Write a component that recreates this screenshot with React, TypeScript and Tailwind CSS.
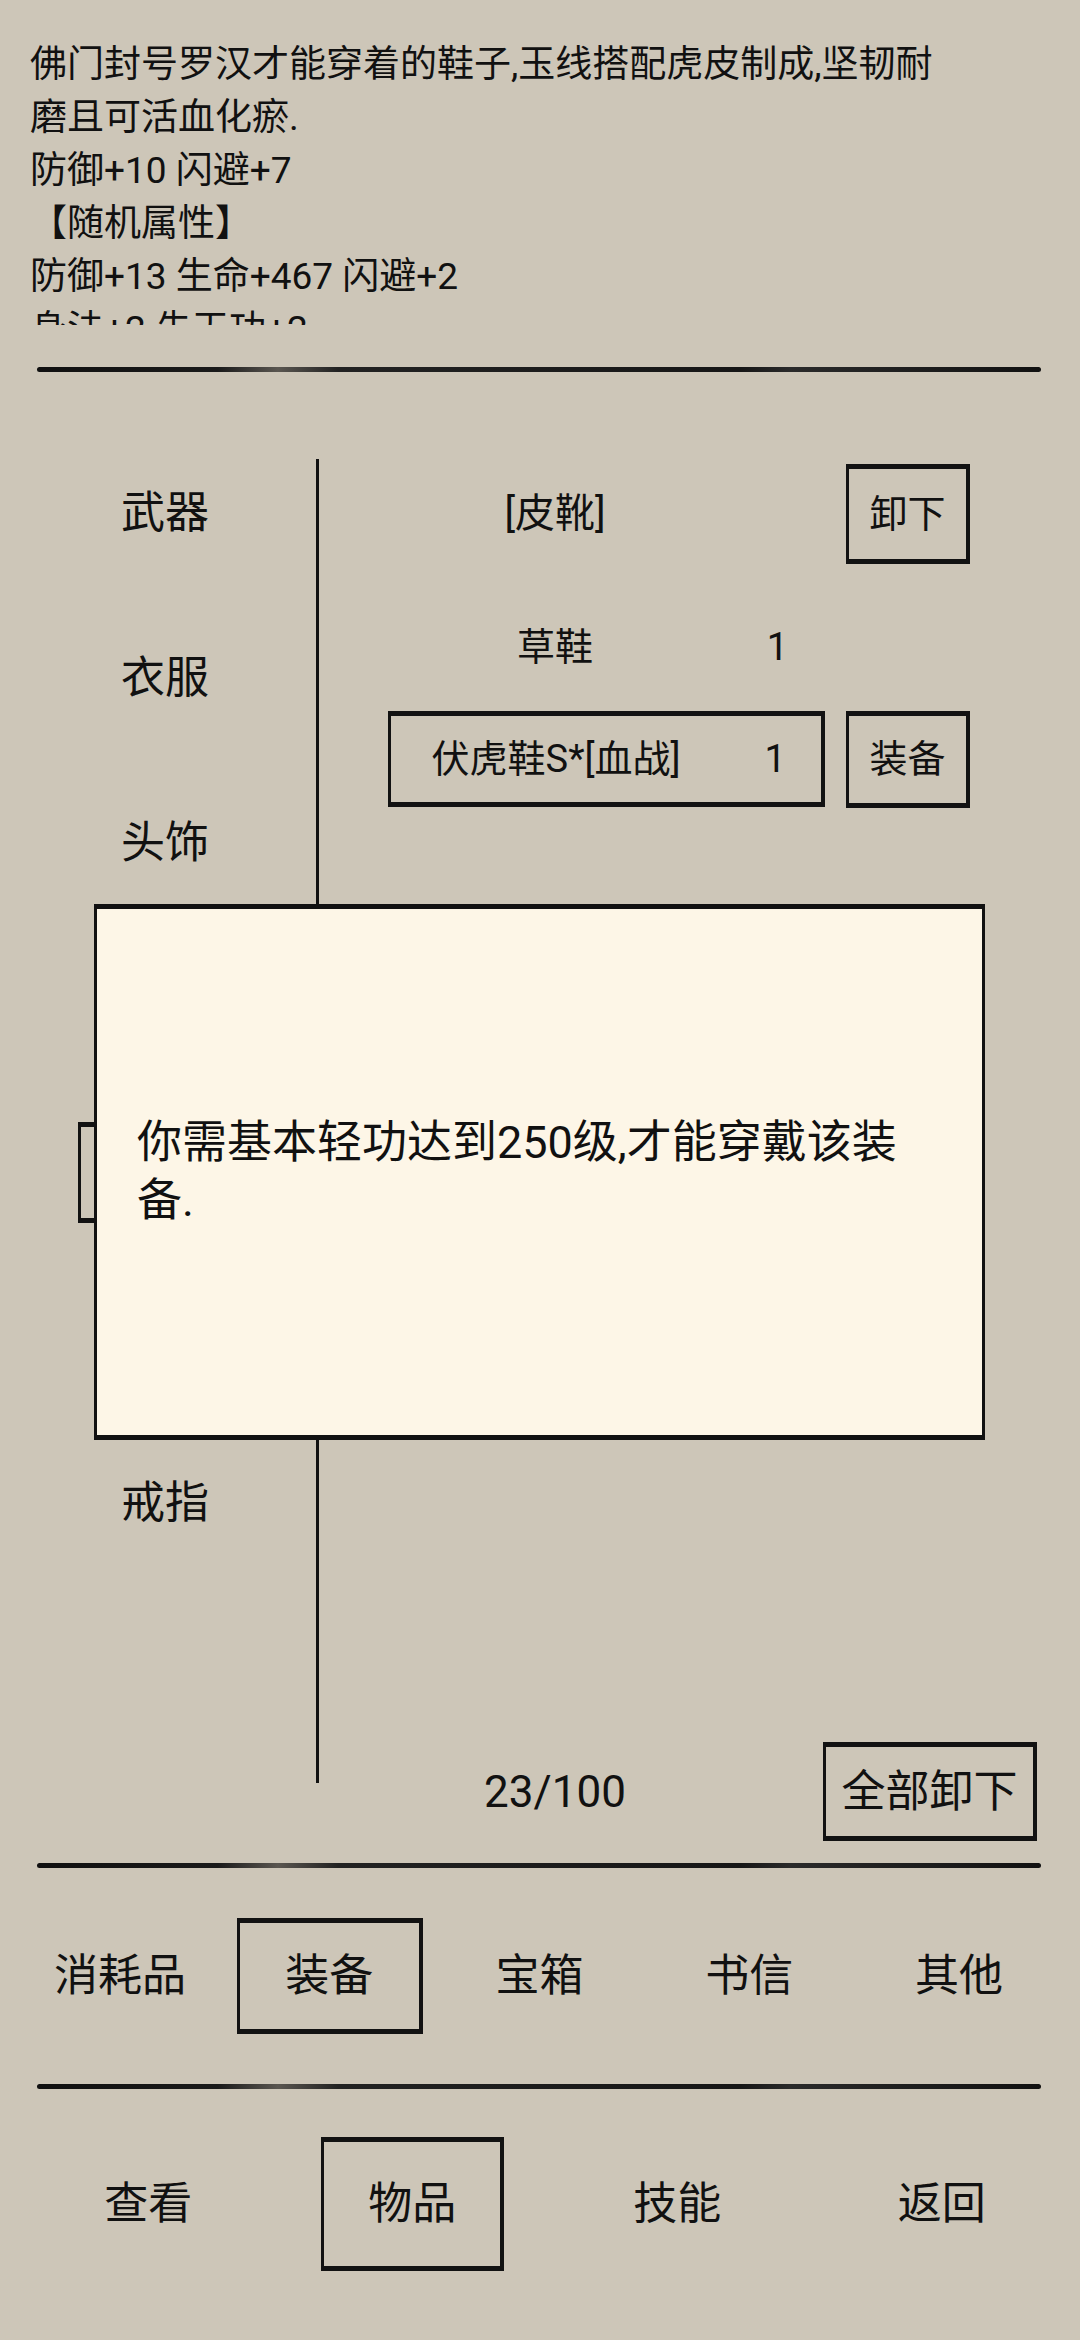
import type { ReactNode } from 'react';

const categories = ['武器', '衣服', '头饰', '项链', '鞋子', '腰带', '戒指'];
const selectedCategory = 4;

const description = [
  '佛门封号罗汉才能穿着的鞋子,玉线搭配虎皮制成,坚韧耐',
  '磨且可活血化瘀.',
  '防御+10 闪避+7',
  '【随机属性】',
  '防御+13 生命+467 闪避+2',
  '身法+2 先天功+2',
];

const bagTabs = ['消耗品', '装备', '宝箱', '书信', '其他'];
const navTabs = ['查看', '物品', '技能', '返回'];

// ink-brush frame used for buttons and selected items
function Brush({ className = '', children }: { className?: string; children?: ReactNode }) {
  return (
    <div
      className={`flex items-center justify-center border-[#121212] border-t-[5px] border-b-[5px] border-l-[3px] border-r-[4px] ${className}`}
    >
      {children}
    </div>
  );
}

function Stroke() {
  return (
    <div className="mx-[37px] h-[5px] w-[1004px] rounded-full bg-[linear-gradient(90deg,#101010_0%,#1a1a1a_18%,#5a5650_24%,#222_30%,#161616_70%,#2a2a2a_75%,#111_100%)]" />
  );
}

export default function App() {
  return (
    <div className="relative h-[2340px] w-[1080px] overflow-hidden bg-[#cdc6b8] font-[Roboto,'Noto_Sans_CJK_SC',sans-serif] text-[#111]">
      <div className="h-[325px] overflow-hidden pl-[30px] pt-[38px]">
        <div className="w-[930px] text-[37px] leading-[53px]">
          {description.map((line) => (
            <div key={line} className="whitespace-nowrap">{line}</div>
          ))}
        </div>
      </div>

      <div className="mt-[42px]">
        <Stroke />
      </div>

      {/* equipment slots + bag list */}
      <div className="flex h-[1491px]">
        <div className="w-[316px] pl-[14px] pt-[58px]">
          {categories.map((c, i) => (
            <div key={c} className="flex h-[165px] items-center justify-center text-[44px]">
              {i === selectedCategory ? (
                <Brush className="h-[101px] w-[174px]">{c}</Brush>
              ) : (
                c
              )}
            </div>
          ))}
        </div>

        <div className="mt-[87px] h-[1324px] w-[3px] bg-[#111]" />

        <div className="flex flex-1 flex-col pb-[22px] pl-[69px] pt-[92px]">
          <div className="flex h-[100px] items-center">
            <div className="w-[437px]">
              <div className="w-[334px] text-center text-[40px]">[皮靴]</div>
            </div>
            <Brush className="ml-[21px] h-[100px] w-[124px] text-[38px]">卸下</Brush>
          </div>

          <div className="mt-[35px] flex h-[96px] items-center text-[38px]">
            <div className="w-[334px] text-center">草鞋</div>
            <div className="w-[103px] pl-[8px] text-center">1</div>
          </div>

          <div className="mt-[16px] flex h-[96px] items-center">
            <Brush className="h-[96px] w-[437px] !justify-start text-[38px]">
              <div className="w-[331px] text-center">伏虎鞋S*[血战]</div>
              <div className="w-[100px] pl-[8px] text-center">1</div>
            </Brush>
            <Brush className="ml-[21px] h-[97px] w-[124px] text-[38px]">装备</Brush>
          </div>

          <div className="mt-auto flex items-center">
            <div className="w-[334px] text-center text-[44px]">23/100</div>
            <Brush className="ml-[101px] h-[99px] w-[214px] text-[44px]">全部卸下</Brush>
          </div>
        </div>
      </div>

      <Stroke />

      <div className="grid h-[216px] grid-cols-5 items-center pl-[15px] pr-[16px] text-[44px]">
        {bagTabs.map((t) => (
          <div key={t} className="flex justify-center">
            {t === '装备' ? <Brush className="h-[116px] w-[186px]">{t}</Brush> : t}
          </div>
        ))}
      </div>

      <Stroke />

      <div className="grid h-[230px] grid-cols-4 items-center pl-[16px] pr-[6px] text-[44px]">
        {navTabs.map((t) => (
          <div key={t} className="flex justify-center">
            {t === '物品' ? <Brush className="h-[134px] w-[183px]">{t}</Brush> : t}
          </div>
        ))}
      </div>

      {/* requirement popup */}
      <div className="absolute left-[94px] top-[904px] flex h-[536px] w-[891px] items-center border-[#111] border-t-[5px] border-b-[5px] border-l-[3px] border-r-[3px] bg-[#fdf6e7] pl-[40px]">
        <div className="w-[785px] text-[45px] leading-[58px]">你需基本轻功达到250级,才能穿戴该装备.</div>
      </div>
    </div>
  );
}
